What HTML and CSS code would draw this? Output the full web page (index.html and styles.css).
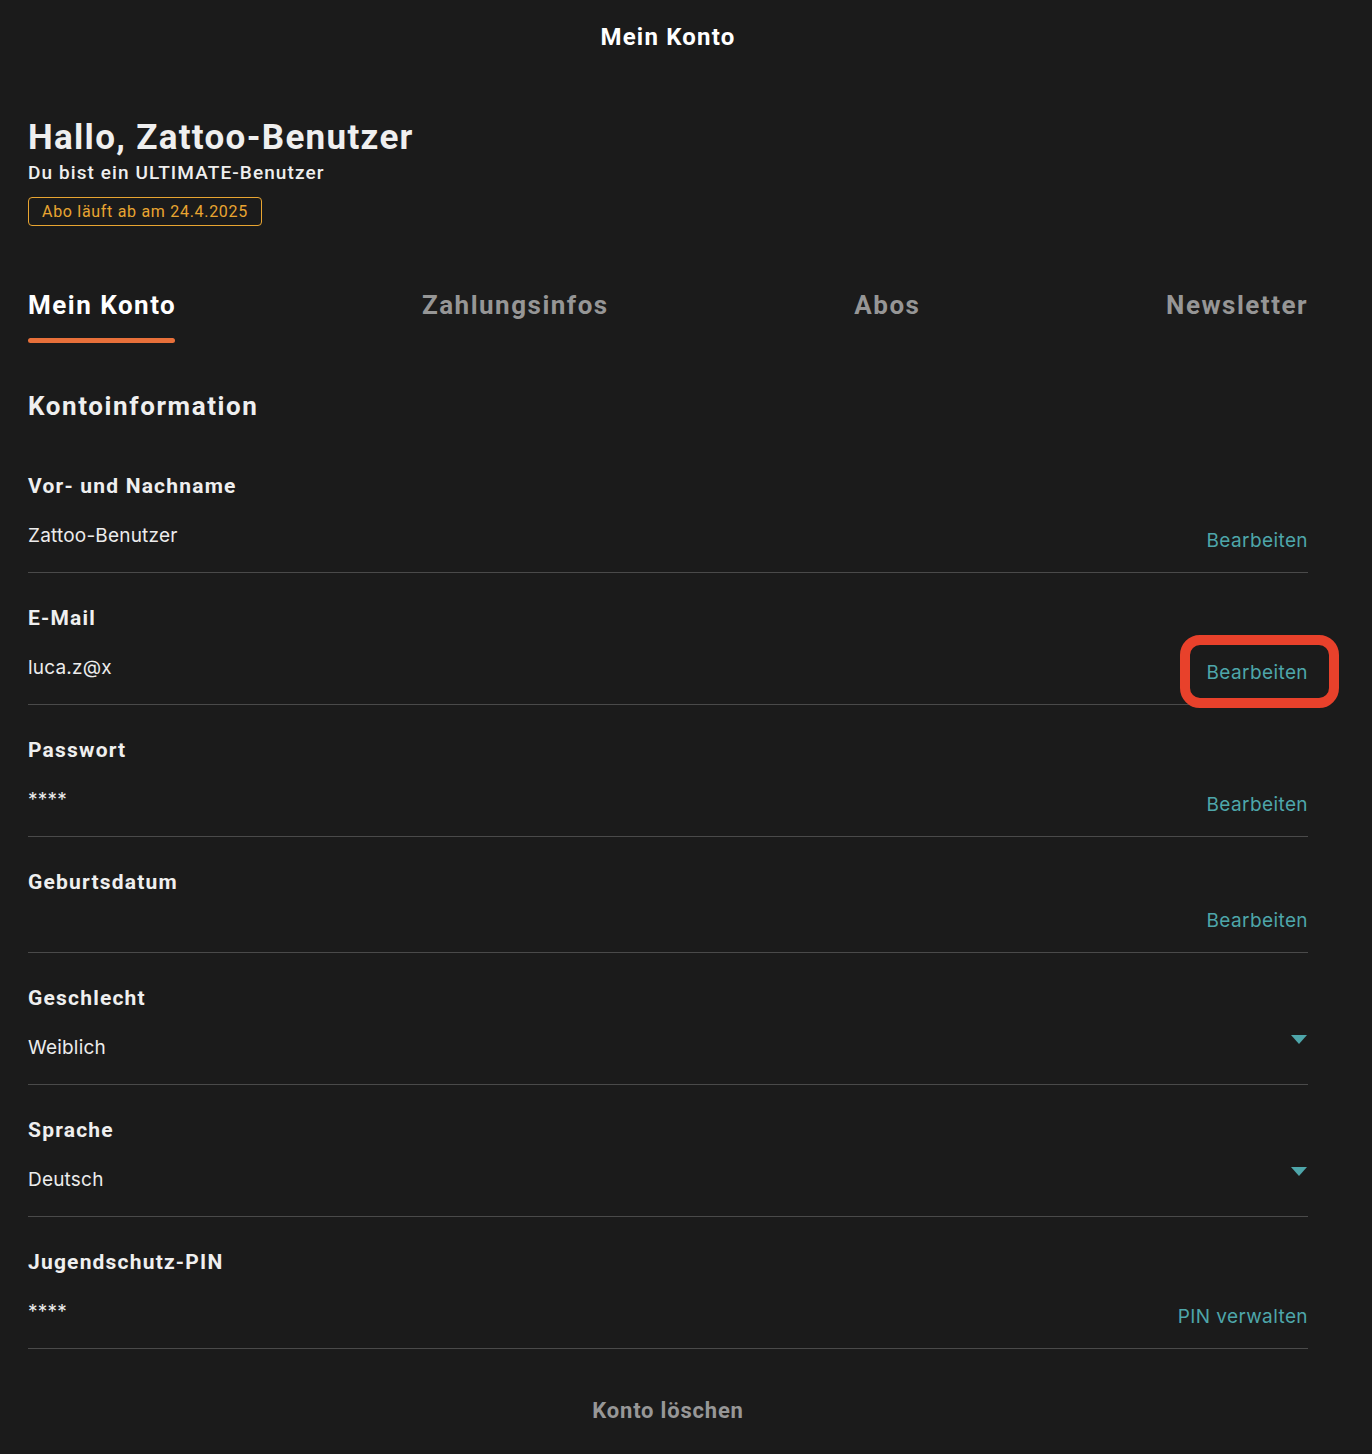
FILE: index.html
```html
<!DOCTYPE html>
<html lang="de">

<head>
    <meta charset="utf-8">
    <title>Mein Konto</title>
    <link rel="stylesheet" href="styles.css">
</head>

<body>

    <div class="page">
        <div class="topbar">Mein Konto</div>

        <h1 class="hello">Hallo, Zattoo-Benutzer</h1>
        <div class="plan">Du bist ein ULTIMATE-Benutzer</div>
        <span class="badge">Abo läuft ab am 24.4.2025</span>

        <div class="tabs">
            <a class="tab active">Mein Konto</a>
            <a class="tab">Zahlungsinfos</a>
            <a class="tab">Abos</a>
            <a class="tab">Newsletter</a>
        </div>

        <h2 class="section-title">Kontoinformation</h2>

        <div class="rows">
            <div class="row">
                <div class="label">Vor- und Nachname</div>
                <div class="line">
                    <span class="value">Zattoo-Benutzer</span>
                    <a class="action">Bearbeiten</a>
                </div>
            </div>
            <div class="row">
                <div class="label">E-Mail</div>
                <div class="line">
                    <span class="value">luca.z@x</span>
                    <a class="action marked">Bearbeiten</a>
                </div>
            </div>
            <div class="row">
                <div class="label">Passwort</div>
                <div class="line">
                    <span class="value">****</span>
                    <a class="action">Bearbeiten</a>
                </div>
            </div>
            <div class="row row-empty">
                <div class="label">Geburtsdatum</div>
                <div class="line">
                    <span class="value"></span>
                    <a class="action">Bearbeiten</a>
                </div>
            </div>
            <div class="row">
                <div class="label">Geschlecht</div>
                <div class="line">
                    <span class="value">Weiblich</span>
                    <span class="caret"></span>
                </div>
            </div>
            <div class="row">
                <div class="label">Sprache</div>
                <div class="line">
                    <span class="value">Deutsch</span>
                    <span class="caret"></span>
                </div>
            </div>
            <div class="row">
                <div class="label">Jugendschutz-PIN</div>
                <div class="line">
                    <span class="value">****</span>
                    <a class="action">PIN verwalten</a>
                </div>
            </div>
        </div>

        <div class="delete">Konto löschen</div>
    </div>

</body>

</html>
```

FILE: styles.css
```css
body {
    margin: 0;
    background-color: #1b1b1b;
    color: #efefef;
    font-family: Roboto, sans-serif;
}

.page {
    width: 1280px;
    padding: 0 28px;
}

.topbar {
    height: 75px;
    line-height: 75px;
    text-align: center;
    font-size: 24px;
    font-weight: 700;
    letter-spacing: 1.2px;
    color: #ffffff;
}

.hello {
    margin: 42px 0 0;
    font-size: 35px;
    line-height: 42px;
    font-weight: 700;
    letter-spacing: 1.3px;
}

.plan {
    margin-top: 2px;
    font-size: 19px;
    line-height: 24px;
    font-weight: 500;
    letter-spacing: 1.1px;
}

.badge {
    display: inline-block;
    margin-top: 12px;
    padding: 3px 13px;
    border: 1px solid #e9a531;
    border-radius: 4px;
    color: #e9a531;
    font-size: 16px;
    line-height: 21px;
    letter-spacing: 0.7px;
}

.tabs {
    display: flex;
    justify-content: space-between;
    margin-top: 62px;
}

.tab {
    font-size: 26px;
    line-height: 34px;
    font-weight: 700;
    letter-spacing: 1.5px;
    color: #969696;
}

.tab::after {
    content: "";
    display: block;
    height: 5px;
    margin-top: 16px;
    margin-right: 1.5px;
    border-radius: 3px;
}

.tab.active {
    color: #ffffff;
}

.tab.active::after {
    background-color: #e8703a;
}

.section-title {
    margin: 46px 0 0;
    font-size: 26px;
    line-height: 34px;
    font-weight: 700;
    letter-spacing: 1.6px;
}

.rows {
    margin-top: 18px;
}

.row {
    padding: 32px 0 17px;
    border-bottom: 1px solid #4a4a4a;
}

.label {
    font-size: 21px;
    line-height: 26px;
    font-weight: 700;
    letter-spacing: 1.2px;
}

.line {
    display: flex;
    justify-content: space-between;
    align-items: flex-start;
    min-height: 33px;
    margin-top: 23px;
}

.row-empty .line {
    margin-top: 7px;
}

.value {
    font-family: Inter, "Noto Sans", sans-serif;
    font-size: 19px;
    line-height: 28px;
    letter-spacing: 0.2px;
    color: #ececec;
}

.action {
    position: relative;
    padding-top: 5px;
    font-family: Inter, "Noto Sans", sans-serif;
    font-size: 19px;
    line-height: 28px;
    letter-spacing: 0.4px;
    color: #4ea6aa;
}

.action.marked::before {
    content: "";
    position: absolute;
    left: -27px;
    right: -31px;
    top: -19px;
    bottom: -21px;
    border: 10px solid #e8412b;
    border-radius: 20px;
}

.caret {
    width: 0;
    height: 0;
    margin: 1px 1px 0 0;
    border-left: 8px solid transparent;
    border-right: 8px solid transparent;
    border-top: 9px solid #4ea6aa;
}

.delete {
    margin-top: 48px;
    text-align: center;
    font-size: 22px;
    line-height: 28px;
    font-weight: 700;
    letter-spacing: 0.8px;
    color: #979797;
}
```
